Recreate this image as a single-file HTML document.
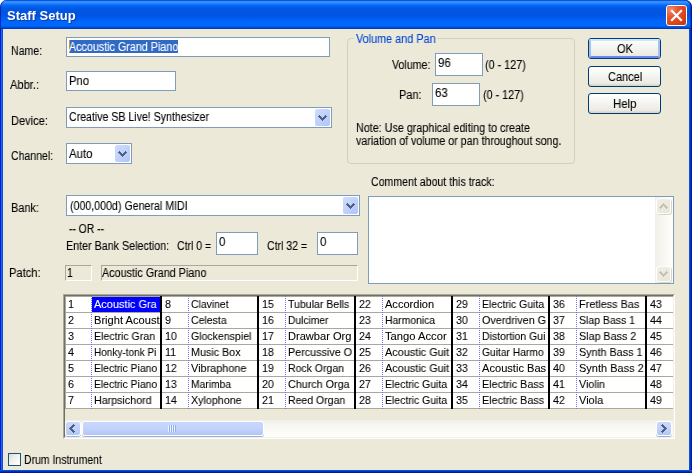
<!DOCTYPE html>
<html><head><meta charset="utf-8"><title>Staff Setup</title>
<style>
*{box-sizing:border-box;margin:0;padding:0}
html,body{width:692px;height:473px;overflow:hidden;background:#ece9d8}
body{position:relative;font-family:"Liberation Sans",sans-serif;font-size:12px;color:#000}
.a{position:absolute;white-space:nowrap}
.t{-webkit-text-stroke:.1px;will-change:transform;position:absolute;white-space:pre;transform-origin:0 0;line-height:14px;height:14px}
#cw{left:0;top:0;width:692px;height:10px;background:#fff}
#title{left:0;top:0;width:692px;height:29px;border-radius:7px 7px 0 0;box-shadow:inset -1px 0 0 rgba(0,16,120,.75),inset -2px 0 0 rgba(0,30,160,.45),inset 1px 0 0 rgba(0,20,170,.7);
 background:linear-gradient(180deg,#0855dd 0px,#0855dd 1px,#3a8fff 1.5px,#3089ff 3px,#137aff 4px,#0568f4 5.5px,#0058e4 8px,#0054e0 14px,#0058e8 17px,#0062f6 20px,#0068ff 23px,#0066fc 25.5px,#0058e6 27px,#0040c8 28px,#0034b4 29px)}
#ttext{will-change:transform;left:7px;top:8px;font-weight:bold;font-size:13px;color:#fff;text-shadow:1px 1px 0 #0f3aa0;transform-origin:0 0}
#bl{left:0;top:29px;width:3px;height:444px;background:linear-gradient(90deg,#0019cf 0,#0019cf 1px,#1a6af0 1px,#1a6af0 2px,#0a4edc 2px)}
#br{left:689px;top:29px;width:3px;height:444px;background:linear-gradient(90deg,#0a50dc 0,#0a50dc 1px,#0034c8 1px,#0034c8 2px,#001a9c 2px)}
#bb{left:0;top:470px;width:692px;height:3px;background:linear-gradient(180deg,#0a50dc 0,#0a50dc 1px,#0030c0 1px,#0030c0 2px,#001a9c 2px)}
#close{left:666px;top:5px;width:21px;height:21px;border:1px solid #fff;border-radius:3px;background:radial-gradient(circle at 20% 20%,#ee8d74 0%,#e4592f 32%,#dc4619 62%,#c2300a 100%)}
.inp{background:#fff;border:1px solid #7f9db9}
.btn{width:73px;height:21px;border:1px solid #003c74;border-radius:3px;background:linear-gradient(180deg,#fff 0%,#f6f6f2 40%,#ecebe5 85%,#d6d0c5 100%)}
.btn.def:after{content:'';box-sizing:border-box;position:absolute;left:0;top:0;width:71px;height:19px;border:2px solid;border-color:#cee7ff #a4c0f0 #6d86ee #a4c0f0;border-radius:2px}
.cbtn{width:15px;height:17px;border-radius:2px;background:linear-gradient(135deg,#cfdcfd 0%,#c1d2fa 50%,#b0c4f4 100%)}
.sunk{border:1px solid;border-color:#aca899 #fff #fff #aca899}
#grid{left:63px;top:294px;width:612px;height:145px;border:1px solid;border-color:#aca899 #fff #fff #aca899;background:#ece9d8}
#gin{left:0;top:0;width:610px;height:143px;border:1px solid;border-color:#716f64 #f1efe2 #f1efe2 #716f64}
#cells{left:0;top:0;width:608px;height:113px;background:#fff;overflow:hidden}
.hl{left:0;width:608px;height:1px;background:#aca899}
.vb{top:0;width:2px;height:113px;background:#000}
.vd{top:0;width:1px;height:113px;background:repeating-linear-gradient(180deg,#7272ff 0,#7272ff 1px,#fff 1px,#fff 2px)}
.g{-webkit-text-stroke:.08px;will-change:transform;position:absolute;white-space:pre;font-size:11px;line-height:13px;height:13px;transform-origin:0 0;transform:scaleX(.975)}
#hs{left:0;top:124px;width:608px;height:17px;background:linear-gradient(180deg,#f0efe7 0%,#f7f6f1 30%,#fefefb 100%)}
.sb{border-radius:3px;background:linear-gradient(180deg,#c9d7fc 0%,#c1d2fa 55%,#b2c5f5 100%);border:1px solid #fff;box-shadow:0 1px 0 #98afe0}
</style></head><body>
<div class="a" id="cw"></div><div class="a" id="title"></div>
<div class="a" id="ttext">Staff Setup</div>
<div class="a" id="close"><svg width="19" height="19" viewBox="0 0 19 19" style="position:absolute;left:0;top:0"><path d="M5 5 L14 14 M14 5 L5 14" stroke="#fff" stroke-width="2.2" stroke-linecap="square"/></svg></div>
<div class="a" id="bl"></div><div class="a" id="br"></div><div class="a" id="bb"></div>
<div class="a inp" style="left:66px;top:37px;width:264px;height:20px"></div>
<div class="a" style="left:69px;top:40px;width:109px;height:13px;background:#316ac5"></div>
<div class="a" style="left:69px;top:40px;width:1px;height:13px;background:#ce953a"></div>
<div class="a inp" style="left:66px;top:71px;width:110px;height:20px"></div>
<div class="a inp" style="left:66px;top:107px;width:266px;height:21px"></div>
<div class="a cbtn" style="left:315px;top:109px"><svg width="9" height="6" viewBox="0 0 9 6" style="position:absolute;left:3px;top:6px" shape-rendering="crispEdges"><path d="M1 0h1v1h1v1h1v1h1v-1h1v-1h1v-1h1v1h1v1h-1v1h-1v1h-1v1h-1v1h-1v-1h-1v-1h-1v-1h-1v-1h-1v-1h1z" fill="#4d6185"/></svg></div>
<div class="a inp" style="left:66px;top:143px;width:66px;height:21px"></div>
<div class="a cbtn" style="left:115px;top:145px"><svg width="9" height="6" viewBox="0 0 9 6" style="position:absolute;left:3px;top:6px" shape-rendering="crispEdges"><path d="M1 0h1v1h1v1h1v1h1v-1h1v-1h1v-1h1v1h1v1h-1v1h-1v1h-1v1h-1v1h-1v-1h-1v-1h-1v-1h-1v-1h-1v-1h1z" fill="#4d6185"/></svg></div>
<div class="a inp" style="left:66px;top:195px;width:294px;height:21px"></div>
<div class="a cbtn" style="left:343px;top:197px"><svg width="9" height="6" viewBox="0 0 9 6" style="position:absolute;left:3px;top:6px" shape-rendering="crispEdges"><path d="M1 0h1v1h1v1h1v1h1v-1h1v-1h1v-1h1v1h1v1h-1v1h-1v1h-1v1h-1v1h-1v-1h-1v-1h-1v-1h-1v-1h-1v-1h1z" fill="#4d6185"/></svg></div>
<div class="a inp" style="left:216px;top:232px;width:42px;height:23px"></div>
<div class="a inp" style="left:317px;top:232px;width:41px;height:23px"></div>
<div class="a sunk" style="left:65px;top:265px;width:27px;height:16px"></div>
<div class="a sunk" style="left:101px;top:265px;width:257px;height:16px"></div>
<div class="a" style="left:347px;top:38px;width:228px;height:126px;border:1px solid #d0d0bf;border-radius:4px"></div>
<div class="a" style="left:354px;top:36px;width:83px;height:5px;background:#ece9d8"></div>
<div class="a inp" style="left:435px;top:53px;width:48px;height:23px"></div>
<div class="a inp" style="left:432px;top:83px;width:48px;height:23px"></div>
<div class="a btn def" style="left:588px;top:38px"></div>
<div class="a btn" style="left:588px;top:66px"></div>
<div class="a btn" style="left:588px;top:93px"></div>
<div class="a inp" style="left:368px;top:196px;width:306px;height:88px"></div>
<div class="a" style="left:655px;top:197px;width:17px;height:86px;background:linear-gradient(90deg,#f1efe8,#fefefb)"></div>
<div class="a" style="left:656px;top:198px;width:15px;height:16px;border:1px solid #fff;border-radius:3px;background:linear-gradient(135deg,#f1efe6,#e8e5d8);box-shadow:1px 1px 0 #d9d6c6"><svg width="9" height="6" viewBox="0 0 9 6" style="position:absolute;left:2px;top:4px;transform:scaleY(-1)" shape-rendering="crispEdges"><path d="M1 0h1v1h1v1h1v1h1v-1h1v-1h1v-1h1v1h1v1h-1v1h-1v1h-1v1h-1v1h-1v-1h-1v-1h-1v-1h-1v-1h-1v-1h1z" fill="#c6c3b3"/></svg></div>
<div class="a" style="left:656px;top:266px;width:15px;height:16px;border:1px solid #fff;border-radius:3px;background:linear-gradient(135deg,#f1efe6,#e8e5d8);box-shadow:1px 1px 0 #d9d6c6"><svg width="9" height="6" viewBox="0 0 9 6" style="position:absolute;left:2px;top:4px" shape-rendering="crispEdges"><path d="M1 0h1v1h1v1h1v1h1v-1h1v-1h1v-1h1v1h1v1h-1v1h-1v1h-1v1h-1v1h-1v-1h-1v-1h-1v-1h-1v-1h-1v-1h1z" fill="#c6c3b3"/></svg></div>
<div class="a" id="grid"><div class="a" id="gin"><div class="a" id="cells">
<div class="a hl" style="top:0"></div><div class="a" style="left:0;top:0;width:1px;height:113px;background:#aca899"></div>
<div class="a hl" style="top:16px"></div>
<div class="a hl" style="top:32px"></div>
<div class="a hl" style="top:48px"></div>
<div class="a hl" style="top:64px"></div>
<div class="a hl" style="top:80px"></div>
<div class="a hl" style="top:96px"></div>
<div class="a hl" style="top:112px"></div>
<div class="a" style="left:27px;top:1px;width:68px;height:15px;background:#0000ff"></div>
<div class="g" style="left:3px;top:2px">1</div>
<div class="g" style="left:29px;top:2px;transform:scaleX(0.995);color:#fff">Acoustic Gra</div>
<div class="g" style="left:3px;top:18px">2</div>
<div class="g" style="left:29px;top:18px;transform:scaleX(1.011)">Bright Acoust</div>
<div class="g" style="left:3px;top:34px">3</div>
<div class="g" style="left:29px;top:34px;transform:scaleX(0.961)">Electric Gran</div>
<div class="g" style="left:3px;top:50px">4</div>
<div class="g" style="left:29px;top:50px;transform:scaleX(0.910)">Honky-tonk Pi</div>
<div class="g" style="left:3px;top:66px">5</div>
<div class="g" style="left:29px;top:66px;transform:scaleX(0.938)">Electric Piano</div>
<div class="g" style="left:3px;top:82px">6</div>
<div class="g" style="left:29px;top:82px;transform:scaleX(0.938)">Electric Piano</div>
<div class="g" style="left:3px;top:98px">7</div>
<div class="g" style="left:29px;top:98px;transform:scaleX(0.971)">Harpsichord</div>
<div class="g" style="left:100px;top:2px">8</div>
<div class="g" style="left:126px;top:2px;transform:scaleX(0.944)">Clavinet</div>
<div class="g" style="left:100px;top:18px">9</div>
<div class="g" style="left:126px;top:18px;transform:scaleX(0.956)">Celesta</div>
<div class="g" style="left:100px;top:34px">10</div>
<div class="g" style="left:126px;top:34px;transform:scaleX(0.959)">Glockenspiel</div>
<div class="g" style="left:100px;top:50px">11</div>
<div class="g" style="left:126px;top:50px;transform:scaleX(0.978)">Music Box</div>
<div class="g" style="left:100px;top:66px">12</div>
<div class="g" style="left:126px;top:66px;transform:scaleX(0.989)">Vibraphone</div>
<div class="g" style="left:100px;top:82px">13</div>
<div class="g" style="left:126px;top:82px;transform:scaleX(0.934)">Marimba</div>
<div class="g" style="left:100px;top:98px">14</div>
<div class="g" style="left:126px;top:98px;transform:scaleX(0.973)">Xylophone</div>
<div class="g" style="left:197px;top:2px">15</div>
<div class="g" style="left:223px;top:2px;transform:scaleX(0.959)">Tubular Bells</div>
<div class="g" style="left:197px;top:18px">16</div>
<div class="g" style="left:223px;top:18px;transform:scaleX(0.932)">Dulcimer</div>
<div class="g" style="left:197px;top:34px">17</div>
<div class="g" style="left:223px;top:34px;transform:scaleX(1.008)">Drawbar Org</div>
<div class="g" style="left:197px;top:50px">18</div>
<div class="g" style="left:223px;top:50px;transform:scaleX(0.980)">Percussive O</div>
<div class="g" style="left:197px;top:66px">19</div>
<div class="g" style="left:223px;top:66px;transform:scaleX(0.955)">Rock Organ</div>
<div class="g" style="left:197px;top:82px">20</div>
<div class="g" style="left:223px;top:82px;transform:scaleX(0.978)">Church Orga</div>
<div class="g" style="left:197px;top:98px">21</div>
<div class="g" style="left:223px;top:98px;transform:scaleX(0.955)">Reed Organ</div>
<div class="g" style="left:294px;top:2px">22</div>
<div class="g" style="left:320px;top:2px;transform:scaleX(1.005)">Accordion</div>
<div class="g" style="left:294px;top:18px">23</div>
<div class="g" style="left:320px;top:18px;transform:scaleX(0.942)">Harmonica</div>
<div class="g" style="left:294px;top:34px">24</div>
<div class="g" style="left:320px;top:34px;transform:scaleX(1.018)">Tango Accor</div>
<div class="g" style="left:294px;top:50px">25</div>
<div class="g" style="left:320px;top:50px;transform:scaleX(0.989)">Acoustic Guit</div>
<div class="g" style="left:294px;top:66px">26</div>
<div class="g" style="left:320px;top:66px;transform:scaleX(0.989)">Acoustic Guit</div>
<div class="g" style="left:294px;top:82px">27</div>
<div class="g" style="left:320px;top:82px;transform:scaleX(0.950)">Electric Guita</div>
<div class="g" style="left:294px;top:98px">28</div>
<div class="g" style="left:320px;top:98px;transform:scaleX(0.950)">Electric Guita</div>
<div class="g" style="left:391px;top:2px">29</div>
<div class="g" style="left:417px;top:2px;transform:scaleX(0.950)">Electric Guita</div>
<div class="g" style="left:391px;top:18px">30</div>
<div class="g" style="left:417px;top:18px;transform:scaleX(0.980)">Overdriven G</div>
<div class="g" style="left:391px;top:34px">31</div>
<div class="g" style="left:417px;top:34px;transform:scaleX(0.951)">Distortion Gui</div>
<div class="g" style="left:391px;top:50px">32</div>
<div class="g" style="left:417px;top:50px;transform:scaleX(0.933)">Guitar Harmo</div>
<div class="g" style="left:391px;top:66px">33</div>
<div class="g" style="left:417px;top:66px;transform:scaleX(1.009)">Acoustic Bas</div>
<div class="g" style="left:391px;top:82px">34</div>
<div class="g" style="left:417px;top:82px;transform:scaleX(0.977)">Electric Bass</div>
<div class="g" style="left:391px;top:98px">35</div>
<div class="g" style="left:417px;top:98px;transform:scaleX(0.977)">Electric Bass</div>
<div class="g" style="left:488px;top:2px">36</div>
<div class="g" style="left:514px;top:2px;transform:scaleX(0.986)">Fretless Bas</div>
<div class="g" style="left:488px;top:18px">37</div>
<div class="g" style="left:514px;top:18px;transform:scaleX(0.955)">Slap Bass 1</div>
<div class="g" style="left:488px;top:34px">38</div>
<div class="g" style="left:514px;top:34px;transform:scaleX(0.976)">Slap Bass 2</div>
<div class="g" style="left:488px;top:50px">39</div>
<div class="g" style="left:514px;top:50px;transform:scaleX(0.978)">Synth Bass 1</div>
<div class="g" style="left:488px;top:66px">40</div>
<div class="g" style="left:514px;top:66px;transform:scaleX(0.997)">Synth Bass 2</div>
<div class="g" style="left:488px;top:82px">41</div>
<div class="g" style="left:514px;top:82px;transform:scaleX(0.974)">Violin</div>
<div class="g" style="left:488px;top:98px">42</div>
<div class="g" style="left:514px;top:98px;transform:scaleX(0.993)">Viola</div>
<div class="g" style="left:585px;top:2px">43</div>
<div class="g" style="left:585px;top:18px">44</div>
<div class="g" style="left:585px;top:34px">45</div>
<div class="g" style="left:585px;top:50px">46</div>
<div class="g" style="left:585px;top:66px">47</div>
<div class="g" style="left:585px;top:82px">48</div>
<div class="g" style="left:585px;top:98px">49</div>
<div class="a vd" style="left:26px"></div>
<div class="a vb" style="left:95px"></div>
<div class="a vd" style="left:123px"></div>
<div class="a vb" style="left:192px"></div>
<div class="a vd" style="left:220px"></div>
<div class="a vb" style="left:289px"></div>
<div class="a vd" style="left:317px"></div>
<div class="a vb" style="left:386px"></div>
<div class="a vd" style="left:414px"></div>
<div class="a vb" style="left:483px"></div>
<div class="a vd" style="left:511px"></div>
<div class="a vb" style="left:580px"></div>
</div>
<div class="a" id="hs">
<div class="a sb" style="left:0;top:1px;width:16px;height:15px"><svg width="6" height="9" viewBox="0 0 6 9" style="position:absolute;left:3px;top:2px" shape-rendering="crispEdges"><path d="M4 0h1v1h1v1h-1v1h-1v1h-1v1h1v1h1v1h1v1h-1v1h-1v-1h-1v-1h-1v-1h-1v-1h-1v-1h1v-1h1v-1h1v-1h1z" fill="#4d6185"/></svg></div>
<div class="a sb" style="left:17px;top:1px;width:182px;height:15px"><div class="a" style="left:85px;top:3px;width:8px;height:7px;background:repeating-linear-gradient(90deg,#eef4fe 0,#eef4fe 1px,#8cb0f8 1px,#8cb0f8 2px)"></div></div>
<div class="a sb" style="left:591px;top:1px;width:16px;height:15px"><svg width="6" height="9" viewBox="0 0 6 9" style="position:absolute;left:4px;top:2px;transform:scaleX(-1)" shape-rendering="crispEdges"><path d="M4 0h1v1h1v1h-1v1h-1v1h-1v1h1v1h1v1h1v1h-1v1h-1v-1h-1v-1h-1v-1h-1v-1h-1v-1h1v-1h1v-1h1v-1h1z" fill="#4d6185"/></svg></div>
</div>
</div></div>
<div class="a" style="left:8px;top:453px;width:13px;height:13px;border:1px solid #1c5180;background:linear-gradient(135deg,#dcdcd7 0%,#f3f3ef 50%,#fff 100%)"></div>
<div class="t" style="left:11px;top:44px;color:#000;transform:scaleX(0.883)">Name:</div>
<div class="t" style="left:10px;top:78px;color:#000;transform:scaleX(0.926)">Abbr.:</div>
<div class="t" style="left:11px;top:114px;color:#000;transform:scaleX(0.923)">Device:</div>
<div class="t" style="left:11px;top:149px;color:#000;transform:scaleX(0.878)">Channel:</div>
<div class="t" style="left:11px;top:201px;color:#000;transform:scaleX(0.913)">Bank:</div>
<div class="t" style="left:9px;top:266px;color:#000;transform:scaleX(0.927)">Patch:</div>
<div class="t" style="left:69px;top:40px;color:#fff;transform:scaleX(0.895)">Accoustic Grand Piano</div>
<div class="t" style="left:69px;top:74px;color:#000;transform:scaleX(0.934)">Pno</div>
<div class="t" style="left:69px;top:110px;color:#000;transform:scaleX(0.882)">Creative SB Live! Synthesizer</div>
<div class="t" style="left:69px;top:147px;color:#000;transform:scaleX(0.950)">Auto</div>
<div class="t" style="left:70px;top:199px;color:#000;transform:scaleX(0.886)">(000,000d) General MIDI</div>
<div class="t" style="left:69px;top:222px;color:#000;transform:scaleX(0.860)">-- OR --</div>
<div class="t" style="left:66px;top:239px;color:#000;transform:scaleX(0.893)">Enter Bank Selection:</div>
<div class="t" style="left:177px;top:239px;color:#000;transform:scaleX(0.874)">Ctrl 0 =</div>
<div class="t" style="left:219px;top:235px;color:#000;transform:scaleX(0.950)">0</div>
<div class="t" style="left:267px;top:239px;color:#000;transform:scaleX(0.876)">Ctrl 32 =</div>
<div class="t" style="left:320px;top:235px;color:#000;transform:scaleX(0.950)">0</div>
<div class="t" style="left:67px;top:266px;color:#000;transform:scaleX(0.866)">1</div>
<div class="t" style="left:102px;top:266px;color:#000;transform:scaleX(0.899)">Acoustic Grand Piano</div>
<div class="t" style="left:356px;top:32px;color:#0046d5;transform:scaleX(0.904)">Volume and Pan</div>
<div class="t" style="left:392px;top:58px;color:#000;transform:scaleX(0.888)">Volume:</div>
<div class="t" style="left:399px;top:88px;color:#000;transform:scaleX(0.913)">Pan:</div>
<div class="t" style="left:438px;top:56px;color:#000;transform:scaleX(0.950)">96</div>
<div class="t" style="left:435px;top:86px;color:#000;transform:scaleX(0.950)">63</div>
<div class="t" style="left:485px;top:58px;color:#000;transform:scaleX(0.900)">(0 - 127)</div>
<div class="t" style="left:483px;top:88px;color:#000;transform:scaleX(0.898)">(0 - 127)</div>
<div class="t" style="left:356px;top:121px;color:#000;transform:scaleX(0.896)">Note: Use graphical editing to create</div>
<div class="t" style="left:356px;top:134px;color:#000;transform:scaleX(0.887)">variation of volume or pan throughout song.</div>
<div class="t" style="left:371px;top:175px;color:#000;transform:scaleX(0.882)">Comment about this track:</div>
<div class="t" style="left:617px;top:42px;color:#000;transform:scaleX(0.925)">OK</div>
<div class="t" style="left:608px;top:70px;color:#000;transform:scaleX(0.916)">Cancel</div>
<div class="t" style="left:613px;top:97px;color:#000;transform:scaleX(0.950)">Help</div>
<div class="t" style="left:24px;top:453px;color:#000;transform:scaleX(0.871)">Drum Instrument</div>
</body></html>
